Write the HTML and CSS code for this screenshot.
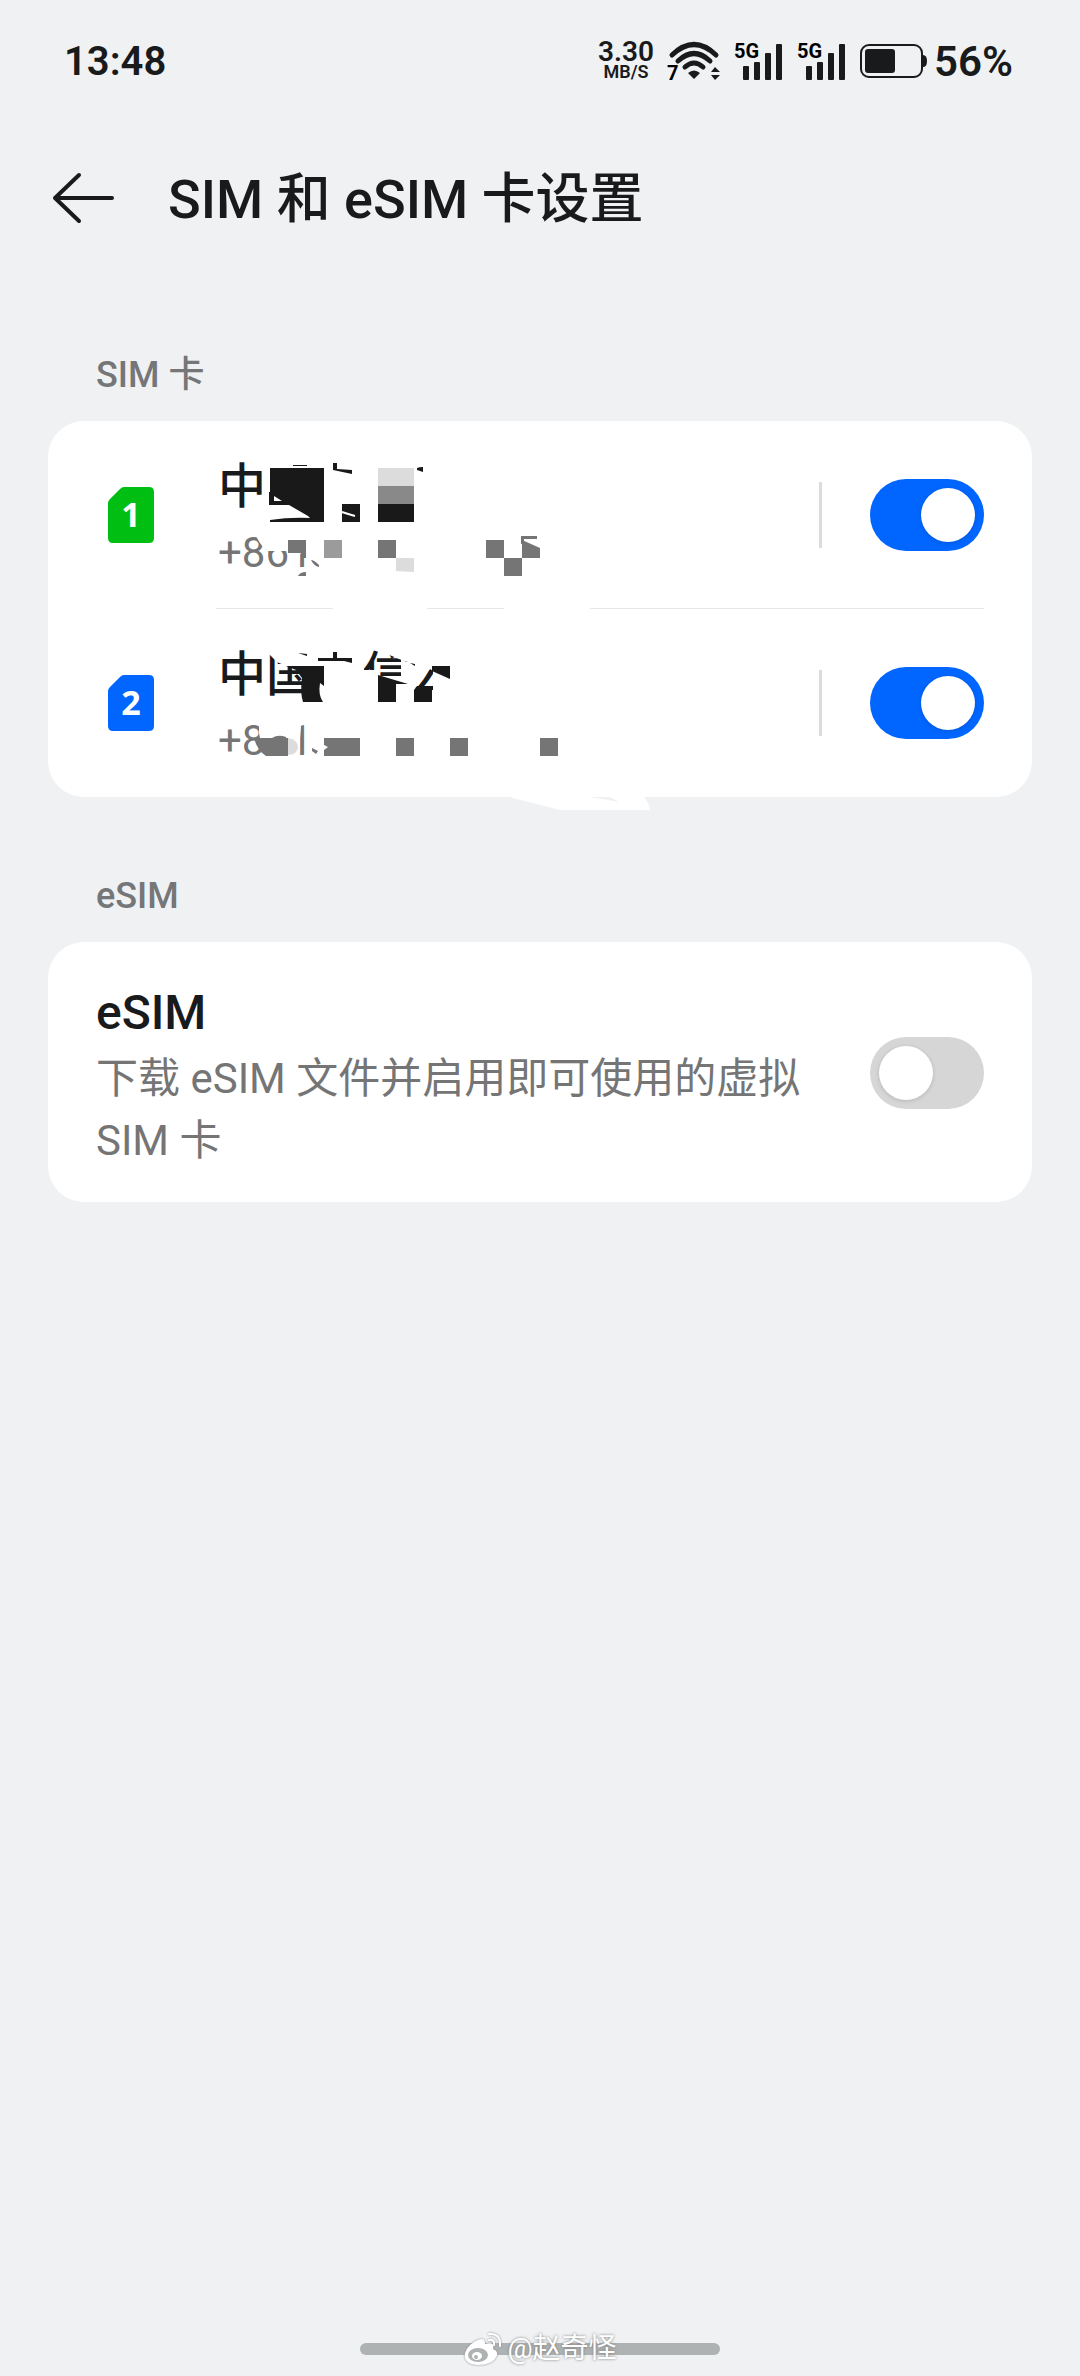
FILE: index.html
```html
<!DOCTYPE html>
<html lang="zh-CN">
<head>
  <meta charset="UTF-8">
  <meta name="viewport" content="width=device-width, initial-scale=1">
  <title>SIM 和 eSIM 卡设置</title>
  <link rel="stylesheet" href="styles.css">
</head>
<body>
  <div class="status-bar">
    <span class="clock">13:48</span>
    <div class="status-icons">
      <div class="speed"><span class="speed-value">3.30</span><span class="speed-unit">MB/S</span></div>
      <svg class="wifi" viewBox="0 0 54 40">
        <g fill="none" stroke="#191a1b" stroke-width="5" stroke-linecap="round">
          <path d="M5 14Q27 -7 49 14"/>
          <path d="M11 20Q27 5 43 20"/>
          <path d="M18 26Q27 18 36 26"/>
        </g>
        <path fill="#191a1b" d="M21 32Q27 27 33 32L27 38ZM44 31l4-5 5 5zM44 34h9l-5 5z"/>
        <text x="0" y="39" class="wifi-text">7</text>
      </svg>
      <svg class="signal" viewBox="0 0 48 40">
        <text x="0" y="17" class="signal-text">5G</text>
        <g fill="#191a1b"><rect x="9" y="25" width="6" height="14" rx="1"/><rect x="20" y="21" width="6" height="18" rx="1"/><rect x="31" y="12" width="6" height="27" rx="1"/><rect x="42" y="3" width="6" height="36" rx="1"/></g>
      </svg>
      <svg class="signal" viewBox="0 0 48 40">
        <text x="0" y="17" class="signal-text">5G</text>
        <g fill="#191a1b"><rect x="9" y="25" width="6" height="14" rx="1"/><rect x="20" y="21" width="6" height="18" rx="1"/><rect x="31" y="12" width="6" height="27" rx="1"/><rect x="42" y="3" width="6" height="36" rx="1"/></g>
      </svg>
      <svg class="battery" viewBox="0 0 68 34">
        <rect x="1" y="1" width="61" height="32" rx="8" fill="none" stroke="#191a1b" stroke-width="2"/>
        <rect x="5" y="5" width="30" height="24" rx="3" fill="#191a1b"/>
        <path d="M62 11h1q4 0 4 6t-4 6h-1z" fill="#191a1b"/>
      </svg>
      <span class="percent">56%</span>
    </div>
  </div>

  <header class="header">
    <button class="back" type="button" aria-label="返回">
      <svg viewBox="0 0 64 52"><path d="M27 3L3 26L27 49M3 26H60" fill="none" stroke="#191a1b" stroke-width="4" stroke-linecap="round" stroke-linejoin="round"/></svg>
    </button>
    <h1>SIM 和 eSIM 卡设置</h1>
  </header>

  <main>
    <h2>SIM 卡</h2>
    <section class="card">
      <div class="sim">
        <svg class="sim-icon" viewBox="0 0 46 56">
          <path class="sim-green" d="M16 0H41Q46 0 46 5V51Q46 56 41 56H5Q0 56 0 51V16Q0 14 2 12L12 2Q14 0 16 0Z"/>
          <text x="23" y="40" class="sim-number">1</text>
        </svg>
        <label class="sim-text" for="sim1">
          <span class="name">中国</span>
          <span class="detail">+861</span>
        </label>
        <span class="bar"></span>
        <input class="switch" type="checkbox" id="sim1" checked>
        <!-- mosaic over the carrier name and number -->
        <svg class="mosaic" viewBox="0 0 460 188" aria-hidden="true">
          <g fill="#fff">
            <path d="M51 36H104V104H51Z"/>
            <path d="M41 110H104V134H88L78 130H50L44 122L41 117Z"/>
            <path d="M117 181H211V190H117ZM288 181H374V190H288Z"/>
          </g>
          <g fill="#191919">
            <path d="M54 47H108V101H54V99Q74 96 94 97L92 95L73 84H53V71H57L65 80H58V76L54 71Z"/>
            <path d="M77 44H91V45H77ZM117 42H121V48L136 49V53L117 49ZM201 47Q203 46 207 46V51L201 49Z"/>
            <path d="M126 83H144V101H126Z"/>
            <rect x="162" y="83" width="36" height="18"/>
          </g>
          <path d="M58 75L66 80H58Z" fill="#fff"/>
          <path d="M126 91Q132 93 139 95" fill="none" stroke="#fff" stroke-width="2"/>
          <path d="M162 47h36v18h-36z" fill="#dcdcdc"/>
          <path d="M162 65h36v18h-36z" fill="#898989"/>
          <g fill="#757575">
            <path d="M72 119h18v18h-5v-5h-13zM162 119h18v18h-18zM270 119h18v18h-18zM288 137h18v18h-18zM306 119l18 8v10h-18z"/>
            <path d="M305 115h16v3h-13v5h-3zM82 155Q84 151 90 151V155ZM95 139Q98 139 103 144V146Q98 145 95 139Z"/>
          </g>
          <path d="M108 119h18v18h-18z" fill="#9b9b9b"/>
          <path d="M180 137h18v14l-18-1z" fill="#dcdcdc"/>
        </svg>
      </div>
      <div class="sim">
        <svg class="sim-icon" viewBox="0 0 46 56">
          <path class="sim-blue" d="M16 0H41Q46 0 46 5V51Q46 56 41 56H5Q0 56 0 51V16Q0 14 2 12L12 2Q14 0 16 0Z"/>
          <text x="23" y="40" class="sim-number">2</text>
        </svg>
        <label class="sim-text" for="sim2">
          <span class="name">中国电信公</span>
          <span class="detail">+861</span>
        </label>
        <span class="bar"></span>
        <input class="switch" type="checkbox" id="sim2" checked>
        <svg class="mosaic mosaic-two" viewBox="0 0 460 208" aria-hidden="true">
          <g fill="#fff">
            <path d="M53 38H98V57H70L61 53L53 45Z"/>
            <path d="M97 36H148V100H97Z"/>
            <path d="M146 61H162V100H146Z"/>
            <path d="M172 36H196V54L188 52L171 45Z"/>
            <path d="M185 50L198 57V76L185 72ZM162 68H198V100H162Z"/>
            <path d="M194 36H214V60L197 76H194ZM214 36H246V100H217V62L214 60ZM194 81H220V100H194Z"/>
            <path d="M43 110H83L85 118L82 150H48L43 124Z"/>
            <path d="M289 187L344 201H434Q433 193 427 187Z"/>
          </g>
          <g fill="#191919">
            <path d="M82 44L91 45V47ZM102 49H117V43H121V49H136V54L128 52H102ZM194 54L199 55V57Z"/>
            <path d="M70 57H108V77L104 74Q102 86 107 93H87Q84 84 86 69L80 61Z"/>
            <path d="M162 66L192 75H180V93H162ZM198 81L201 77H216V93H198ZM216 57H234V70L216 62Z"/>
          </g>
          <path d="M38 129H72V147H50Q41 141 38 129ZM56 129Q62 125 70 128V130H56ZM108 129H144V147H108V141L112 138L108 136ZM180 129h18v18h-18zM234 129h18v18h-18zM324 129h18v18h-18z" fill="#757575"/>
          <path d="M72 129Q82 131 82 138T72 146Z" fill="#dcdcdc"/>
          <path d="M96 139l6 3-2 3-4-3z" fill="#757575"/>
          <path d="M372 188h22l9 5q-14-3-31-5z" fill="#eff1f3"/>
        </svg>
      </div>
    </section>

    <h2>eSIM</h2>
    <section class="card esim">
      <label class="esim-text" for="esim">
        <span class="name">eSIM</span>
        <span class="detail">下载 eSIM 文件并启用即可使用的虚拟 SIM 卡</span>
      </label>
      <input class="switch" type="checkbox" id="esim">
    </section>
  </main>

  <footer class="nav">
    <div class="watermark">
      <svg viewBox="0 0 40 34">
        <path d="M15 8Q5 12 2 21Q0 32 14 33Q31 33 34 23Q35 19 30 17Q32 9 22 12Q22 5 15 8Z" fill="#fff"/>
        <ellipse cx="15" cy="23" rx="10" ry="7" fill="#aeb2b2"/>
        <ellipse cx="14" cy="24" rx="5" ry="4" fill="#fff"/>
        <circle cx="13" cy="25" r="2" fill="#aeb2b2"/>
        <path d="M26 2Q38 1 37 14M26 8Q32 7 31 13" fill="none" stroke="#fff" stroke-width="2" stroke-linecap="round"/>
      </svg>
      <span>@赵奇怪</span>
    </div>
  </footer>
</body>
</html>
```
FILE: styles.css
```css
* {
  box-sizing: border-box;
}
body {
  margin: 0;
  min-height: 100vh;
  display: flex;
  flex-direction: column;
  background: #eff1f3;
  color: #191a1b;
  font-family: Roboto, "Noto Sans CJK SC", sans-serif;
}
svg {
  overflow: visible;
}
.status-bar {
  display: flex;
  justify-content: space-between;
  align-items: center;
  height: 122px;
  padding: 0 68px 0 64px;
}
.clock, .percent {
  font-size: 40px;
  font-weight: 600;
}
.status-icons {
  display: flex;
  align-items: center;
}
.percent {
  width: 78px;
  font-size: 42px;
}
.speed {
  display: flex;
  flex-direction: column;
  align-items: center;
  width: 58px;
  margin-right: 12px;
}
.speed-value {
  font-size: 28px;
  line-height: 22px;
  font-weight: 600;
}
.speed-unit {
  font-size: 18px;
  line-height: 18px;
  font-weight: 600;
}
.wifi {
  width: 54px;
  height: 40px;
  margin-right: 13px;
}
.wifi-text {
  font-size: 20px;
  font-weight: 700;
}
.signal {
  width: 48px;
  height: 40px;
  margin-right: 15px;
}
.signal-text {
  font-size: 20px;
  font-weight: 700;
}
.battery {
  width: 68px;
  height: 34px;
  margin-right: 6px;
}
.header {
  display: flex;
  align-items: center;
  height: 152px;
  padding: 0 52px;
}
.back {
  width: 64px;
  height: 52px;
  margin-right: 52px;
  padding: 0;
  border: 0;
  background: none;
}
.back svg {
  display: block;
}
h1 {
  margin: 0;
  padding-top: 4px;
  font-size: 54px;
  line-height: 80px;
  font-weight: 500;
}
main {
  flex: 1;
  padding: 47px 48px;
}
h2 {
  height: 100px;
  margin: 0;
  padding: 27px 48px 0;
  color: #757678;
  font-size: 36px;
  line-height: 54px;
  font-weight: 500;
}
.card {
  margin-bottom: 45px;
  border-radius: 36px;
  background: #fff;
}
.sim {
  position: relative;
  display: flex;
  align-items: center;
  height: 188px;
  padding: 0 48px 0 60px;
}
/* divider between the two cards, starts under the name */
.sim + .sim::before {
  content: "";
  position: absolute;
  top: -1px;
  left: 168px;
  right: 48px;
  height: 1px;
  background: #e6e6e6;
}
.sim-icon {
  width: 46px;
  height: 56px;
  margin-right: 64px;
}
.sim-green {
  fill: #00be12;
}
.sim-blue {
  fill: #0066ff;
}
.sim-number {
  fill: #fff;
  font-family: "Open Sans", sans-serif;
  font-size: 34px;
  font-weight: 700;
  text-anchor: middle;
}
.sim-text, .esim-text {
  flex: 1;
  padding-top: 5px;
}
.name, .detail {
  display: block;
}
.name {
  font-size: 48px;
  line-height: 70px;
  font-weight: 500;
}
.detail {
  color: #757575;
  font-size: 42px;
  line-height: 62px;
}
.bar {
  width: 3px;
  height: 66px;
  margin-right: 48px;
  background: #dcdcdc;
}
.switch {
  flex: none;
  appearance: none;
  display: flex;
  align-items: center;
  width: 114px;
  height: 72px;
  margin: 0;
  padding: 0 9px;
  border-radius: 36px;
  background: #d6d6d6;
}
.switch::before {
  content: "";
  width: 54px;
  height: 54px;
  border-radius: 50%;
  background: #fff;
  box-shadow: 0 1px 4px rgba(0, 0, 0, 0.15);
}
.switch:checked {
  justify-content: flex-end;
  background: #0066ff;
}
.mosaic {
  position: absolute;
  top: 0;
  left: 168px;
  width: 460px;
  height: 188px;
  z-index: 1;
  pointer-events: none;
}
.mosaic-two {
  height: 208px;
}
.esim {
  display: flex;
  align-items: center;
  justify-content: space-between;
  padding: 31px 48px 30px;
}
.esim-text {
  margin-right: 60px;
}
.nav {
  display: flex;
  align-items: center;
  justify-content: center;
  width: 360px;
  height: 12px;
  margin: 0 auto 21px;
  border-radius: 6px;
  background: #afb2b2;
}
.watermark {
  display: flex;
  align-items: center;
  color: #fff;
  font-size: 28px;
  line-height: 36px;
  text-shadow: 0 0 3px #777;
}
.watermark svg {
  width: 40px;
  height: 34px;
  margin-right: 4px;
  filter: drop-shadow(0 0 1px #888);
}
```
